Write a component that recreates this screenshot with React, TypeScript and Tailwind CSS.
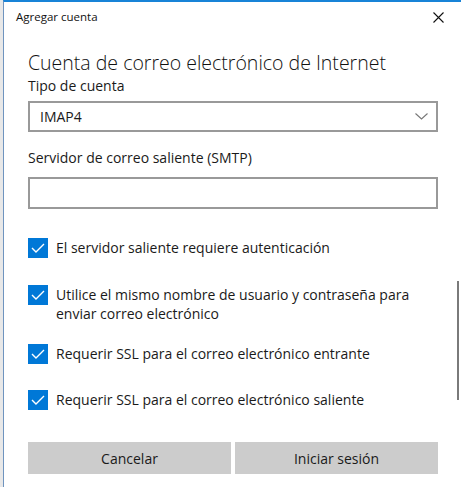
const font = { fontFamily: '"Open Sans", "Noto Sans", sans-serif' };

function Check({ children }: { children: React.ReactNode }) {
  return (
    <div className="flex items-start gap-[8px]">
      <span className="flex h-[20px] w-[20px] shrink-0 items-center justify-center bg-[#0078d7]">
        <svg width="14" height="10" viewBox="0 0 14 10" fill="none">
          <path d="M1 5 L5 9 L13 1" stroke="white" strokeWidth="1.4" />
        </svg>
      </span>
      <span className="text-[14px] leading-[19px] text-[#1a1a1a]">{children}</span>
    </div>
  );
}

export default function App() {
  return (
    <div className="flex h-[487px] w-[461px] bg-[#e8e8e8]" style={font}>
      <div className="w-[3px]" />
      <div className="relative flex flex-1 flex-col border-l border-t-2 border-l-[#6f94bf] border-t-[#1883d7] bg-white">
        <div className="flex h-[30px] items-center justify-between pl-[12px] pr-[17px]">
          <span className="text-[11.5px] text-[#111]">Agregar cuenta</span>
          <svg width="11" height="11" viewBox="0 0 11 11">
            <path d="M0.5 0.5 L10.5 10.5 M10.5 0.5 L0.5 10.5" stroke="#111" strokeWidth="1.1" />
          </svg>
        </div>

        <div className="flex flex-col pl-[24px] pr-[23px]">
          <h1 className="mt-[18px] text-[19.5px] font-light leading-[26px] text-[#111]">
            Cuenta de correo electrónico de Internet
          </h1>
          <label className="text-[14px] leading-[20px] text-[#1a1a1a]">Tipo de cuenta</label>
          <div className="mt-[5px] flex h-[31px] items-center justify-between border-2 border-[#999] pl-[10px] pr-[8px]">
            <span className="text-[14px] text-[#1a1a1a]">IMAP4</span>
            <svg width="13" height="7" viewBox="0 0 13 7">
              <path d="M0.5 0.5 L6.5 6 L12.5 0.5" stroke="#777" fill="none" strokeWidth="1.1" />
            </svg>
          </div>

          <label className="mt-[16px] text-[14px] leading-[20px] text-[#1a1a1a]">
            Servidor de correo saliente (SMTP)
          </label>
          <div className="mt-[9px] h-[32px] border-2 border-[#999]" />

          <div className="mt-[29px] flex flex-col">
            <Check>El servidor saliente requiere autenticación</Check>
            <div className="mt-[27px]">
              <Check>Utilice el mismo nombre de usuario y contraseña para enviar correo electrónico</Check>
            </div>
            <div className="mt-[21px]">
              <Check>Requerir SSL para el correo electrónico entrante</Check>
            </div>
            <div className="mt-[26px]">
              <Check>Requerir SSL para el correo electrónico saliente</Check>
            </div>
          </div>

          <div className="mt-[32px] flex gap-[4px]">
            <button className="h-[32px] flex-1 bg-[#cccccc] text-[14px] text-[#1a1a1a]">Cancelar</button>
            <button className="h-[32px] flex-1 bg-[#cccccc] text-[14px] text-[#1a1a1a]">Iniciar sesión</button>
          </div>
        </div>

        <div className="absolute right-[2px] top-[279px] h-[119px] w-[2px] bg-[#7a7a7a]" />
      </div>
    </div>
  );
}
